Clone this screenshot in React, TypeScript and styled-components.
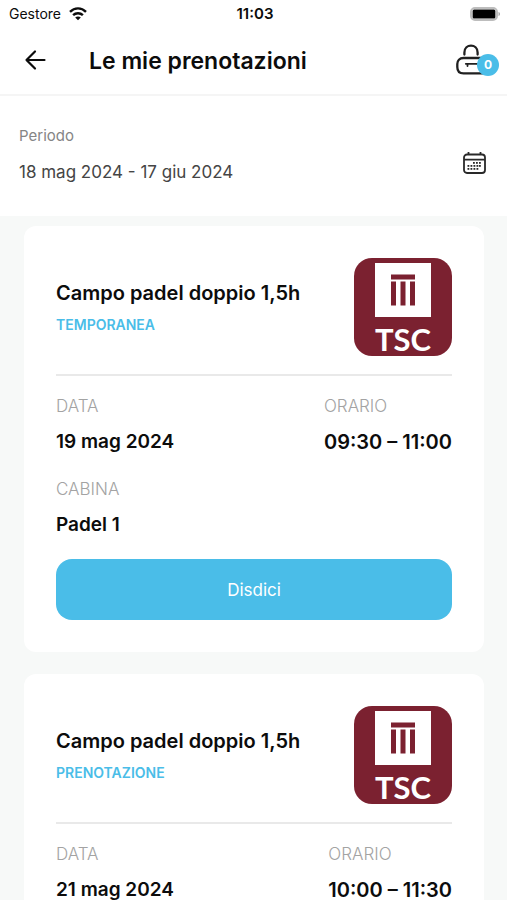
import React from "react";
import styled, { createGlobalStyle } from "styled-components";

const GlobalStyle = createGlobalStyle`
  *, *::before, *::after { box-sizing: border-box; }
  body {
    margin: 0;
    background: #f7f9f8;
    color: #0c0c0c;
    font-family: Inter, "Liberation Sans", sans-serif;
  }
  h1, h2, p, dl, dt, dd { margin: 0; }
  button { border: 0; padding: 0; background: none; color: inherit; font: inherit; cursor: pointer; }
  svg { flex: none; }
`;

const Screen = styled.div`
  display: flex;
  flex-direction: column;
  height: 100vh;
  overflow: hidden;
`;

const StatusBar = styled.div`
  display: grid;
  grid-template-columns: 1fr auto 1fr;
  align-items: center;
  height: 28px;
  padding: 0 6px 0 9px;
  background: #fff;
  font-size: 14px;
  line-height: 20px;
`;

const Carrier = styled.span`
  display: flex;
  align-items: center;
  gap: 8px;
`;

const Clock = styled.time`
  font-size: 15px;
  font-weight: 600;
`;

const BatterySlot = styled.span`
  display: flex;
  justify-content: flex-end;
`;

const Header = styled.header`
  display: flex;
  align-items: center;
  height: 68px;
  padding: 0 8px 2px 24px;
  background: #fff;
  border-bottom: 2px solid #f5f5f5;
`;

const BackButton = styled.button`
  display: flex;
  width: 65px;
`;

const Title = styled.h1`
  flex: 1;
  padding-top: 2px;
  font-size: 23px;
  font-weight: 600;
  line-height: 32px;
`;

const LockButton = styled.button`
  position: relative;
  display: flex;
  width: 44px;
`;

const Badge = styled.span`
  position: absolute;
  right: 0;
  bottom: 0;
  width: 22px;
  height: 22px;
  border-radius: 50%;
  background: #4abde8;
  color: #fff;
  font-size: 12px;
  font-weight: 700;
  line-height: 22px;
  text-align: center;
`;

const Period = styled.section`
  display: flex;
  align-items: center;
  justify-content: space-between;
  height: 120px;
  padding: 0 20px 2px 19px;
  background: #fff;
`;

const PeriodText = styled.div`
  display: flex;
  flex-direction: column;
  gap: 14px;
`;

const PeriodLabel = styled.p`
  color: #858585;
  font-size: 15px;
  line-height: 20px;
`;

const PeriodValue = styled.p`
  color: #454545;
  font-size: 17px;
  line-height: 24px;
`;

const CalendarButton = styled.button`
  display: flex;
  margin-top: 16px;
`;

const BookingList = styled.main`
  display: flex;
  flex: 1;
  flex-direction: column;
  gap: 22px;
  min-height: 0;
  overflow: hidden;
  padding: 10px 23px 0 24px;
`;

const Card = styled.article`
  flex: none;
  padding: 32px;
  border-radius: 12px;
  background: #fff;
`;

const CardHead = styled.div`
  display: flex;
  align-items: center;
  justify-content: space-between;
  padding-bottom: 18px;
  border-bottom: 2px solid #e9e9e9;
`;

const CourtName = styled.h2`
  font-size: 20px;
  font-weight: 600;
  line-height: 28px;
`;

const BookingType = styled.p`
  margin-top: 8px;
  color: #4abde8;
  font-size: 14px;
  font-weight: 600;
  line-height: 20px;
`;

const Club = styled.div`
  display: flex;
  flex: none;
  flex-direction: column;
  align-items: center;
  width: 98px;
  height: 98px;
  padding-top: 5px;
  border-radius: 18px;
  background: #7b2130;
  color: #fff;
  font-family: Lato, sans-serif;
  font-size: 31px;
  font-weight: 700;
  line-height: 44px;
`;

const Details = styled.dl`
  display: flex;
  flex-wrap: wrap;
  justify-content: space-between;
  row-gap: 24px;
  padding-top: 18px;
`;

const Detail = styled.div<{ $wide?: boolean }>`
  flex: ${(p) => (p.$wide ? "1 0 100%" : "none")};
`;

const DetailLabel = styled.dt`
  color: #a3a3a3;
  font-size: 17px;
  font-weight: 300;
  line-height: 24px;
`;

const DetailValue = styled.dd<{ $large?: boolean }>`
  padding-top: 13px;
  font-size: ${(p) => (p.$large ? 20 : 19)}px;
  font-weight: 600;
  line-height: 22px;
`;

const CancelButton = styled.button`
  display: block;
  width: 100%;
  height: 61px;
  margin-top: 23px;
  border-radius: 16px;
  background: #4abde8;
  color: #fff;
  font-size: 17px;
`;

const WifiIcon = () => (
  <svg width="18" height="14" viewBox="0 0 18 14" fill="none" stroke="#0c0c0c" strokeWidth="2.4" aria-hidden="true">
    <path d="M1 4.900C5.600.2 12.400.2 17 4.900" />
    <path d="M4.100 8.200c2.800-2.700 7-2.700 9.800 0" />
    <path d="M9 13.300 6.200 10.600c1.600-1.500 4-1.500 5.600 0Z" fill="#0c0c0c" stroke="none" />
  </svg>
);

const BatteryIcon = () => (
  <svg width="31" height="14" viewBox="0 0 31 14" aria-hidden="true">
    <rect x="1" y="1" width="26" height="12" rx="4" fill="#fff" stroke="#bdbdbd" strokeWidth="2" />
    <rect x="2.600" y="2.600" width="22.800" height="8.800" rx="1.500" fill="#000" />
    <path d="M28.500 5v4c2-.6 2-3.400 0-4Z" fill="#aaa" />
  </svg>
);

const ArrowIcon = () => (
  <svg width="23" height="22" viewBox="0 0 23 22" fill="none" stroke="#0c0c0c" strokeWidth="2.200" strokeLinecap="round" strokeLinejoin="round" aria-hidden="true">
    <path d="M20.500 11H2.500M11 2.500 2.500 11l8.500 8.500" />
  </svg>
);

const LockIcon = () => (
  <svg width="36" height="32" viewBox="0 0 36 32" fill="none" stroke="#202020" strokeWidth="2.300" strokeLinecap="round" aria-hidden="true">
    <path d="M9.400 10.500V8.500c0-9.300 13.200-9.300 13.200 0v2" />
    <path d="M30 14H8.500C4.500 14 2.300 16.500 2.300 20v3c0 4 2.400 6.400 6.200 6.400H28" />
    <path d="M10.800 19.800H23M12.500 20v2" strokeWidth="1.800" />
  </svg>
);

const CALENDAR_DOTS = [
  [11, 11], [14, 11], [17, 11],
  [5.5, 14], [8.5, 14], [11.5, 14], [14.5, 14], [17, 14],
  [5.5, 17], [8.5, 17], [11.5, 17], [14.5, 17],
];

const CalendarIcon = () => (
  <svg width="25" height="24" viewBox="0 0 25 24" fill="none" stroke="#292929" strokeWidth="1.800" aria-hidden="true">
    <rect x="2" y="3.500" width="21" height="18.500" rx="3" />
    <path d="M2 8.700h21M6.500 1v3M18.500 1v3" />
    {CALENDAR_DOTS.map(([x, y]) => (
      <rect key={`${x}-${y}`} x={x} y={y} width="1.800" height="1.800" fill="#292929" stroke="none" />
    ))}
  </svg>
);

const ClubLogo = () => (
  <Club>
    <svg width="56" height="54" viewBox="0 0 56 54" aria-hidden="true">
      <rect width="56" height="54" fill="#fff" />
      <path d="M16 11.500h24v5H16zM16 18.500h5v24h-5zM25.500 18.500h5v24h-5zM35 18.500h5v24h-5z" fill="#7b2130" />
    </svg>
    <span>TSC</span>
  </Club>
);

interface Booking {
  court: string;
  type: string;
  date: string;
  time: string;
  cabin?: string;
}

const bookings: Booking[] = [
  { court: "Campo padel doppio 1,5h", type: "TEMPORANEA", date: "19 mag 2024", time: "09:30 – 11:00", cabin: "Padel 1" },
  { court: "Campo padel doppio 1,5h", type: "PRENOTAZIONE", date: "21 mag 2024", time: "10:00 – 11:30" },
];

const BookingCard = ({ booking }: { booking: Booking }) => (
  <Card>
    <CardHead>
      <div>
        <CourtName>{booking.court}</CourtName>
        <BookingType>{booking.type}</BookingType>
      </div>
      <ClubLogo />
    </CardHead>
    <Details>
      <Detail>
        <DetailLabel>DATA</DetailLabel>
        <DetailValue>{booking.date}</DetailValue>
      </Detail>
      <Detail>
        <DetailLabel>ORARIO</DetailLabel>
        <DetailValue $large>{booking.time}</DetailValue>
      </Detail>
      {booking.cabin && (
        <Detail $wide>
          <DetailLabel>CABINA</DetailLabel>
          <DetailValue>{booking.cabin}</DetailValue>
        </Detail>
      )}
    </Details>
    {booking.cabin && <CancelButton type="button">Disdici</CancelButton>}
  </Card>
);

export default function App() {
  return (
    <Screen>
      <GlobalStyle />
      <StatusBar>
        <Carrier>
          Gestore
          <WifiIcon />
        </Carrier>
        <Clock>11:03</Clock>
        <BatterySlot>
          <BatteryIcon />
        </BatterySlot>
      </StatusBar>
      <Header>
        <BackButton type="button" aria-label="Indietro">
          <ArrowIcon />
        </BackButton>
        <Title>Le mie prenotazioni</Title>
        <LockButton type="button" aria-label="Serrature">
          <LockIcon />
          <Badge>0</Badge>
        </LockButton>
      </Header>
      <Period>
        <PeriodText>
          <PeriodLabel>Periodo</PeriodLabel>
          <PeriodValue>18 mag 2024 - 17 giu 2024</PeriodValue>
        </PeriodText>
        <CalendarButton type="button" aria-label="Scegli il periodo">
          <CalendarIcon />
        </CalendarButton>
      </Period>
      <BookingList>
        {bookings.map((booking) => (
          <BookingCard key={booking.date} booking={booking} />
        ))}
      </BookingList>
    </Screen>
  );
}
